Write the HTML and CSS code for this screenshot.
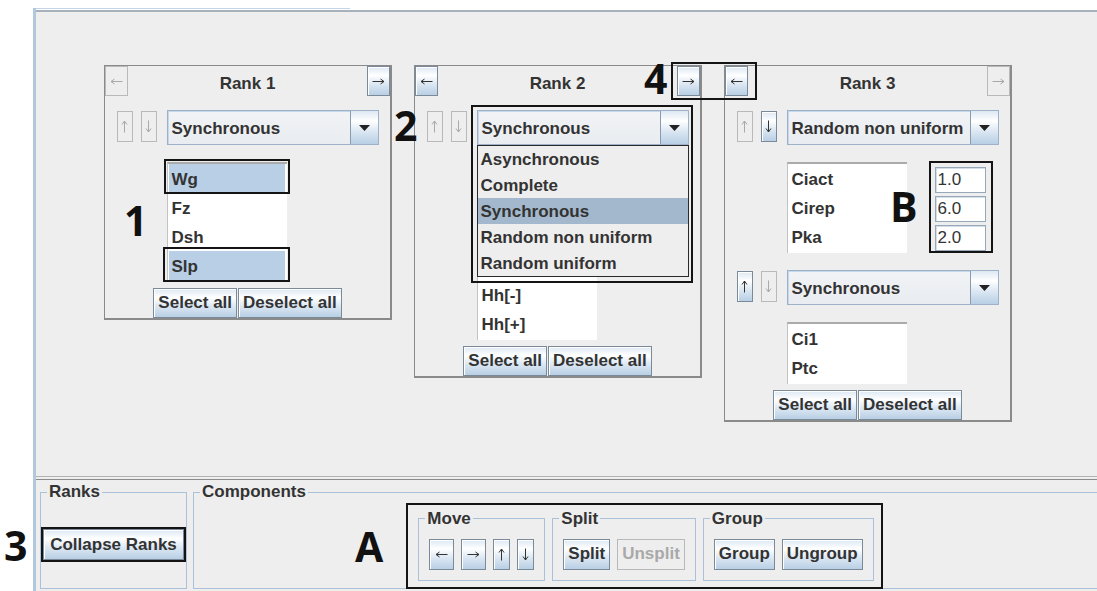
FILE: index.html
```html
<!DOCTYPE html>
<html lang="en">
<head>
<meta charset="utf-8">
<title>Ranks</title>
<link rel="stylesheet" href="styles.css">
</head>
<body>
<div class="app">
  <div class="frame">
    <div class="frame-head"><div class="tab-edge"></div></div>
    <div class="rule"></div>

    <main class="canvas">
      <div class="ranks">

        <!-- Rank 1 -->
        <section class="rank">
          <header class="rank-head">
            <button class="btn nav" disabled><svg class="ico" width="13" height="7" viewBox="0 0 13 7"><path d="M12.5 3.5H1M4.5 1L1 3.5L4.5 6"/></svg></button>
            <h2 class="rank-title">Rank 1</h2>
            <button class="btn nav"><svg class="ico" width="13" height="7" viewBox="0 0 13 7"><path d="M0.5 3.5H12M8.5 1L12 3.5L8.5 6"/></svg></button>
          </header>
          <div class="rank-body">
            <div class="order">
              <button class="btn ord" disabled><svg class="ico" width="7" height="13" viewBox="0 0 7 13"><path d="M3.5 12.5V1M1 4.5L3.5 1L6 4.5"/></svg></button>
              <button class="btn ord" disabled><svg class="ico" width="7" height="13" viewBox="0 0 7 13"><path d="M3.5 0.5V12M1 8.5L3.5 12L6 8.5"/></svg></button>
            </div>
            <div class="combo">
              <span class="combo-value">Synchronous</span>
              <span class="combo-arrow"><svg width="11" height="6" viewBox="0 0 11 6"><path class="tri" d="M0 0H11L5.5 6Z"/></svg></span>
            </div>
            <ul class="list col2">
              <li class="sel">Wg</li>
              <li>Fz</li>
              <li>Dsh</li>
              <li class="sel">Slp</li>
            </ul>
          </div>
          <div class="sel-row">
            <button class="btn">Select all</button><button class="btn">Deselect all</button>
          </div>
        </section>

        <!-- Rank 2 -->
        <section class="rank">
          <header class="rank-head">
            <button class="btn nav"><svg class="ico" width="13" height="7" viewBox="0 0 13 7"><path d="M12.5 3.5H1M4.5 1L1 3.5L4.5 6"/></svg></button>
            <h2 class="rank-title">Rank 2</h2>
            <button class="btn nav"><svg class="ico" width="13" height="7" viewBox="0 0 13 7"><path d="M0.5 3.5H12M8.5 1L12 3.5L8.5 6"/></svg></button>
          </header>
          <div class="rank-body">
            <div class="order">
              <button class="btn ord" disabled><svg class="ico" width="7" height="13" viewBox="0 0 7 13"><path d="M3.5 12.5V1M1 4.5L3.5 1L6 4.5"/></svg></button>
              <button class="btn ord" disabled><svg class="ico" width="7" height="13" viewBox="0 0 7 13"><path d="M3.5 0.5V12M1 8.5L3.5 12L6 8.5"/></svg></button>
            </div>
            <div class="combo">
              <span class="combo-value">Synchronous</span>
              <span class="combo-arrow"><svg width="11" height="6" viewBox="0 0 11 6"><path class="tri" d="M0 0H11L5.5 6Z"/></svg></span>
              <ul class="popup">
                <li>Asynchronous</li>
                <li>Complete</li>
                <li class="sel">Synchronous</li>
                <li>Random non uniform</li>
                <li>Random uniform</li>
              </ul>
            </div>
            <!-- the first rows sit under the open popup -->
            <ul class="list col2">
              <li></li>
              <li></li>
              <li></li>
              <li></li>
              <li>Hh[-]</li>
              <li>Hh[+]</li>
            </ul>
          </div>
          <div class="sel-row">
            <button class="btn">Select all</button><button class="btn">Deselect all</button>
          </div>
        </section>

        <!-- Rank 3 -->
        <section class="rank">
          <header class="rank-head">
            <button class="btn nav"><svg class="ico" width="13" height="7" viewBox="0 0 13 7"><path d="M12.5 3.5H1M4.5 1L1 3.5L4.5 6"/></svg></button>
            <h2 class="rank-title">Rank 3</h2>
            <button class="btn nav" disabled><svg class="ico" width="13" height="7" viewBox="0 0 13 7"><path d="M0.5 3.5H12M8.5 1L12 3.5L8.5 6"/></svg></button>
          </header>
          <div class="rank-body">
            <div class="order">
              <button class="btn ord" disabled><svg class="ico" width="7" height="13" viewBox="0 0 7 13"><path d="M3.5 12.5V1M1 4.5L3.5 1L6 4.5"/></svg></button>
              <button class="btn ord"><svg class="ico" width="7" height="13" viewBox="0 0 7 13"><path d="M3.5 0.5V12M1 8.5L3.5 12L6 8.5"/></svg></button>
            </div>
            <div class="combo">
              <span class="combo-value">Random non uniform</span>
              <span class="combo-arrow"><svg width="11" height="6" viewBox="0 0 11 6"><path class="tri" d="M0 0H11L5.5 6Z"/></svg></span>
            </div>
            <div class="param-row col2">
              <ul class="list">
                <li>Ciact</li>
                <li>Cirep</li>
                <li>Pka</li>
              </ul>
              <div class="fields">
                <input class="field" type="text" value="1.0">
                <input class="field" type="text" value="6.0">
                <input class="field" type="text" value="2.0">
              </div>
            </div>

            <div class="order">
              <button class="btn ord"><svg class="ico" width="7" height="13" viewBox="0 0 7 13"><path d="M3.5 12.5V1M1 4.5L3.5 1L6 4.5"/></svg></button>
              <button class="btn ord" disabled><svg class="ico" width="7" height="13" viewBox="0 0 7 13"><path d="M3.5 0.5V12M1 8.5L3.5 12L6 8.5"/></svg></button>
            </div>
            <div class="combo">
              <span class="combo-value">Synchronous</span>
              <span class="combo-arrow"><svg width="11" height="6" viewBox="0 0 11 6"><path class="tri" d="M0 0H11L5.5 6Z"/></svg></span>
            </div>
            <ul class="list col2">
              <li>Ci1</li>
              <li>Ptc</li>
            </ul>
          </div>
          <div class="sel-row">
            <button class="btn">Select all</button><button class="btn">Deselect all</button>
          </div>
        </section>

      </div>
    </main>

    <div class="sep"></div>

    <footer class="toolbar">
      <fieldset class="group ranks-group">
        <legend>Ranks</legend>
        <button class="btn wide">Collapse Ranks</button>
      </fieldset>
      <fieldset class="group components-group">
        <legend>Components</legend>
        <div class="subgroups">
          <fieldset class="group sub">
            <legend>Move</legend>
            <div class="btn-row">
              <button class="btn mv"><svg class="ico" width="13" height="7" viewBox="0 0 13 7"><path d="M12.5 3.5H1M4.5 1L1 3.5L4.5 6"/></svg></button>
              <button class="btn mv"><svg class="ico" width="13" height="7" viewBox="0 0 13 7"><path d="M0.5 3.5H12M8.5 1L12 3.5L8.5 6"/></svg></button>
              <button class="btn mv-v"><svg class="ico" width="7" height="13" viewBox="0 0 7 13"><path d="M3.5 12.5V1M1 4.5L3.5 1L6 4.5"/></svg></button>
              <button class="btn mv-v"><svg class="ico" width="7" height="13" viewBox="0 0 7 13"><path d="M3.5 0.5V12M1 8.5L3.5 12L6 8.5"/></svg></button>
            </div>
          </fieldset>
          <fieldset class="group sub">
            <legend>Split</legend>
            <div class="btn-row">
              <button class="btn tb">Split</button>
              <button class="btn tb" disabled>Unsplit</button>
            </div>
          </fieldset>
          <fieldset class="group sub">
            <legend>Group</legend>
            <div class="btn-row">
              <button class="btn tb">Group</button>
              <button class="btn tb">Ungroup</button>
            </div>
          </fieldset>
        </div>
      </fieldset>
    </footer>
  </div>
</div>

<!-- callout marks drawn over the window -->
<div class="notes">
  <div class="box box-wg"></div>
  <div class="box box-slp"></div>
  <div class="box box-popup"></div>
  <div class="box box-nav"></div>
  <div class="box box-fields"></div>
  <div class="box box-collapse"></div>
  <div class="box box-tools"></div>
  <span class="mark mark-1">1</span>
  <span class="mark mark-2">2</span>
  <span class="mark mark-3">3</span>
  <span class="mark mark-4">4</span>
  <span class="mark mark-a">A</span>
  <span class="mark mark-b">B</span>
</div>
</body>
</html>
```

FILE: styles.css
```css
* { box-sizing: border-box; }

html, body { margin: 0; }

body {
  position: relative;
  width: 1097px;
  height: 591px;
  overflow: hidden;
  background: #fff;
  font-family: "Liberation Sans", Arial, sans-serif;
  font-size: 17px;
  font-weight: bold;
  color: #333;
}

.app {
  height: 591px;
  padding: 8px 0 0 33px;
}

.frame {
  width: 1066px;
  height: 583px;
  border-left: 3px solid #b2c8df;
  background: #eee;
  display: flex;
  flex-direction: column;
}

.frame-head {
  height: 2px;
  background: #fff;
}

.tab-edge {
  width: 314px;
  height: 2px;
  border-top: 1px solid #c3d5e9;
}

.rule {
  height: 2px;
  background: #a7b1bb;
}

/* ---------- rank panels ---------- */

.canvas {
  flex: none;
  height: 464px;
  padding: 53px 0 0 68px;
}

.ranks {
  display: flex;
  align-items: flex-start;
  gap: 22px;
}

.rank {
  width: 288px;
  border: 1px solid #8a8a8a;
  border-right-width: 2px;
  border-bottom-width: 2px;
}

.rank-head {
  display: flex;
  align-items: center;
  justify-content: space-between;
  height: 30px;
}

.rank-title {
  margin: 5px 0 0;
  font-size: 17px;
  font-weight: bold;
}

.rank-body {
  display: grid;
  grid-template-columns: 41px 212px;
  column-gap: 9px;
  row-gap: 17px;
  justify-content: center;
  margin-top: 14px;
}

.col2 { grid-column: 2; }

.order {
  display: flex;
  gap: 8px;
  align-items: flex-start;
  padding-top: 1px;
}

/* ---------- buttons ---------- */

.btn {
  margin: 0;
  font: inherit;
  color: #333;
  height: 30px;
  padding: 0 4px;
  border: 1px solid #7a8a99;
  border-radius: 0;
  background: linear-gradient(#dde8f3 0%, #ffffff 30%, #dde8f3 60%, #b8cfe5 100%);
  box-shadow: inset 1px 1px 0 #fff;
  display: inline-flex;
  align-items: center;
  justify-content: center;
  white-space: nowrap;
}

.btn:disabled {
  background: #eee;
  border-color: #b9b9b9;
  box-shadow: none;
  color: #a9a9a9;
}

.ico path {
  fill: none;
  stroke: currentColor;
  stroke-width: 1;
}

.nav { width: 23px; padding: 0; }

.ord { width: 16px; height: 31px; padding: 0; }

.sel-row {
  display: flex;
  justify-content: center;
  gap: 1px;
  margin-top: 6px;
}

/* ---------- combo box ---------- */

.combo {
  position: relative;
  display: flex;
  width: 212px;
  height: 35px;
  border: 1px solid #9db2c8;
  box-shadow: inset 1px 1px 0 #c6d7ea;
}

.combo-value {
  flex: 1;
  display: flex;
  align-items: center;
  padding: 2px 0 0 3px;
  background: linear-gradient(#f1f3f6, #e9ecf0);
  margin: 1px 0 0 1px;
}

.combo-arrow {
  width: 28px;
  display: flex;
  align-items: center;
  justify-content: center;
  border-left: 1px solid #8a9bad;
  background: linear-gradient(#dde8f3 0%, #ffffff 30%, #dde8f3 60%, #b8cfe5 100%);
}

.tri { fill: #222; }

.popup {
  position: absolute;
  z-index: 2;
  left: -1px;
  right: -1px;
  top: calc(100% + 1px);
  margin: 0;
  padding: 0;
  list-style: none;
  background: #eee;
  border: 1px solid #2a2a2a;
}

.popup li {
  height: 26px;
  padding: 2px 0 0 3px;
  line-height: 24px;
}

.popup li.sel { background: #a3b8cc; }

/* ---------- lists and fields ---------- */

.list {
  width: 120px;
  margin: 0;
  padding: 0 2px 2px 0;
  list-style: none;
  background: #fff;
  border-top: 2px solid #ababab;
  border-left: 1px solid #c2c2c2;
}

.list li {
  height: 29px;
  padding: 3px 0 0 3px;
  line-height: 26px;
  margin-left: 1px;
}

.list li.sel { background: #b8cfe5; }

.param-row {
  display: flex;
  align-items: center;
  gap: 28px;
}

.fields {
  display: flex;
  flex-direction: column;
  gap: 3px;
  padding-top: 2px;
}

.field {
  width: 51px;
  height: 26px;
  margin: 0;
  padding: 0 2px;
  font: normal 17px "Liberation Sans", Arial, sans-serif;
  color: #333;
  background: #fff;
  border: 1px solid #97a8ba;
  box-shadow: inset 1px 1px 0 #d4dee9;
  outline: none;
}

/* ---------- bottom toolbar ---------- */

.sep {
  flex: none;
  height: 4px;
  border-top: 1px solid #b2b2b2;
  border-bottom: 1px solid #8a8a8a;
}

.toolbar {
  flex: 1;
  display: flex;
  gap: 6px;
  padding: 2px 0 2px 4px;
}

.group {
  margin: 0;
  min-width: 0;
  padding: 0 1px 1px;
  border: 1px solid #aac1d9;
}

.group > legend {
  margin-left: 5px;
  padding: 0 2px;
  line-height: 20px;
  font-size: 17px;
  font-weight: bold;
}

.ranks-group {
  width: 147px;
  display: flex;
  align-items: center;
  justify-content: center;
}

.wide { height: 31px; padding: 0 6px; }

.components-group {
  flex: 1;
  display: flex;
  align-items: center;
  justify-content: center;
}

.subgroups {
  display: flex;
  gap: 7px;
}

.sub {
  padding: 10px;
}

.sub > legend { margin-left: -4px; }

.btn-row {
  display: flex;
  gap: 7px;
}

.mv { width: 25px; height: 31px; padding: 0; }
.mv-v { width: 17px; height: 31px; padding: 0; }
.tb { height: 31px; padding: 0 4px; }

/* ---------- callouts ---------- */

.notes {
  position: absolute;
  inset: 0;
  pointer-events: none;
  z-index: 5;
}

.box {
  position: absolute;
  border: 2px solid #141414;
}

.box-wg { left: 164px; top: 159px; width: 126px; height: 35px; }
.box-slp { left: 163px; top: 247px; width: 127px; height: 35px; }
.box-popup { left: 471px; top: 105px; width: 222px; height: 178px; }
.box-nav { left: 671px; top: 62px; width: 86px; height: 38px; }
.box-fields { left: 929px; top: 161px; width: 64px; height: 92px; }
.box-collapse { left: 41px; top: 527px; width: 145px; height: 35px; }
.box-tools { left: 406px; top: 503px; width: 477px; height: 86px; }

.mark {
  position: absolute;
  font-family: "Open Sans", "Liberation Sans", sans-serif;
  font-weight: 700;
  font-size: 41px;
  line-height: 41px;
  color: #111;
}

.mark-1 { left: 124px; top: 200px; }
.mark-2 { left: 394px; top: 105px; }
.mark-3 { left: 4px; top: 525px; }
.mark-4 { left: 644px; top: 58px; }
.mark-a { left: 355px; top: 526px; }
.mark-b { left: 890px; top: 186px; }
```
